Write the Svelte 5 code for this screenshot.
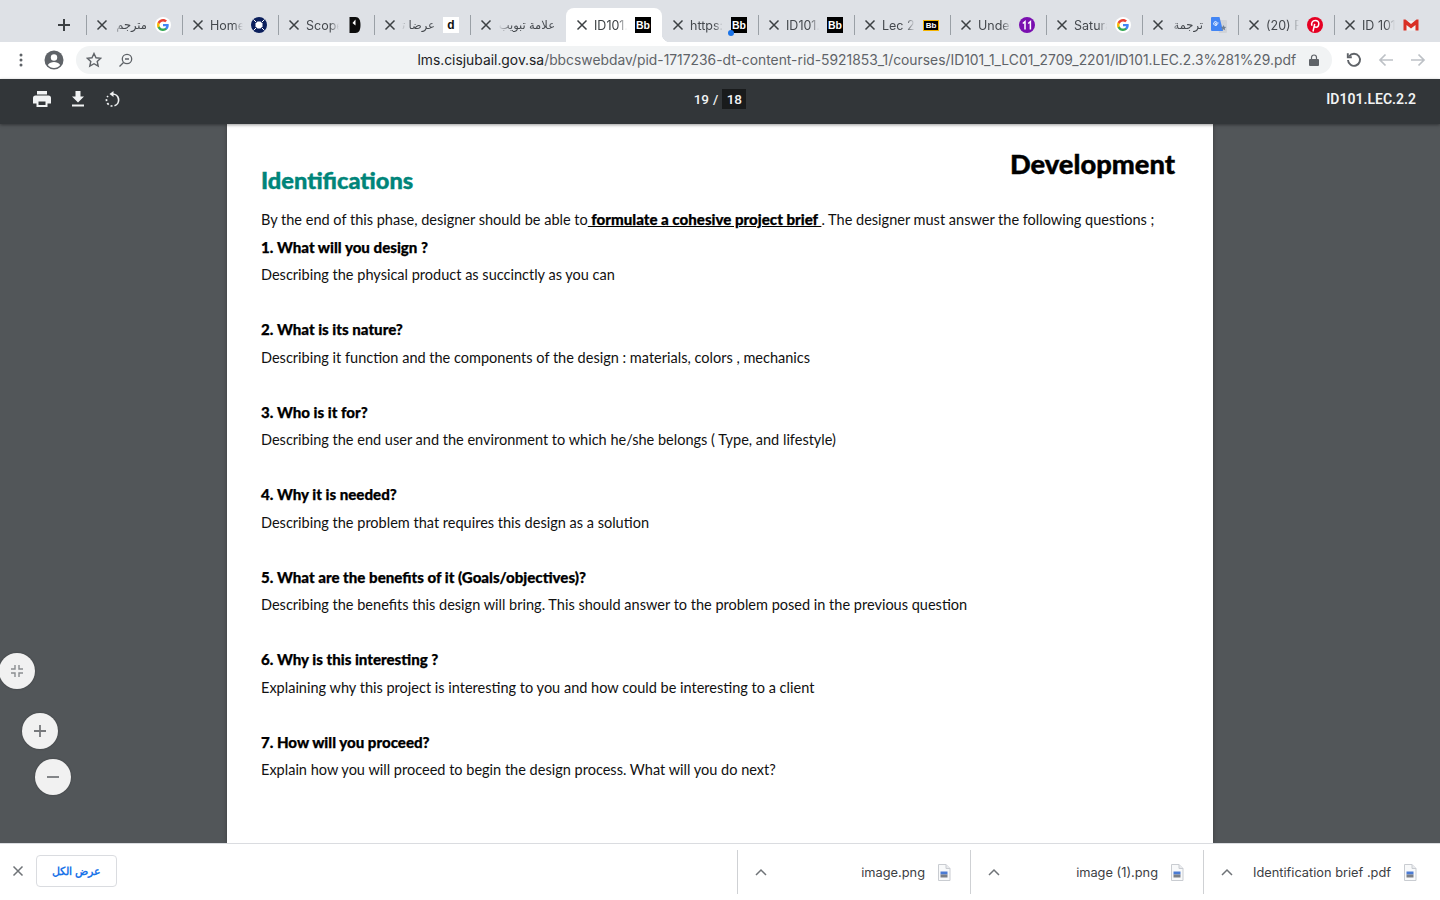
<script lang="ts">
	// Chrome window (RTL UI) showing a PDF lecture slide
	const tabs = [
		{ title: 'مترجم - Google', rtl: true, icon: 'google' },
		{ title: 'Home - Site', icon: 'ring' },
		{ title: 'Scope of work', icon: 'scope' },
		{ title: 'عرضا تقديميا', rtl: true, icon: 'd' },
		{ title: 'علامة تبويب جديدة', rtl: true, wide: true, icon: '' },
		{ title: 'ID101.LEC', active: true, icon: 'bb' },
		{ title: 'https://lms', icon: 'bb', dot: true },
		{ title: 'ID101.LEC', icon: 'bb' },
		{ title: 'Lec 2 slides', icon: 'bby' },
		{ title: 'Understand', icon: 'eleven' },
		{ title: 'Saturation', icon: 'google' },
		{ title: 'ترجمة Google', rtl: true, icon: 'translate' },
		{ title: '(20) Pinterest', icon: 'pin' },
		{ title: 'ID 101 mail', icon: 'gmail' }
	];

	const questions = [
		['1. What will you design ?', 'Describing the physical product as succinctly as you can'],
		['2. What is its nature?', 'Describing it function and the components of the design : materials, colors , mechanics'],
		['3. Who is it for?', 'Describing the end user and the environment to which he/she belongs ( Type, and lifestyle)'],
		['4. Why it is needed?', 'Describing the problem that requires this design as a solution'],
		['5. What are the benefits of it (Goals/objectives)?', 'Describing the benefits this design will bring. This should answer to the problem posed in the previous question'],
		['6. Why is this interesting ?', 'Explaining why this project is interesting to you and how could be interesting to a client'],
		['7. How will you proceed?', 'Explain how you will proceed to begin the design process. What will you do next?']
	];

	const downloads = ['image.png', 'image (1).png', 'Identification brief .pdf'];
</script>

{#snippet close(size = 12, color = '#3c4043')}
	<svg class="x" width={size} height={size} viewBox="0 0 12 12" fill="none" stroke={color} stroke-width="1.5">
		<path d="M1.500 1.500l9 9M10.500 1.500l-9 9" />
	</svg>
{/snippet}

{#snippet favicon(kind)}
	{#if kind === 'google'}
		<svg class="fav" viewBox="0 0 24 24">
			<circle cx="12" cy="12" r="12" fill="#fff" />
			<path fill="#4285f4" d="M20.600 12.200c0-.6-.1-1.200-.2-1.800H12v3.400h4.800c-.2 1.100-.8 2-1.800 2.700v2.200h2.900c1.700-1.600 2.700-3.900 2.700-6.500z" />
			<path fill="#34a853" d="M12 21c2.400 0 4.500-.8 5.900-2.200L15 16.500c-.8.500-1.800.9-3 .9-2.300 0-4.300-1.600-5-3.700H4v2.300C5.500 19 8.500 21 12 21z" />
			<path fill="#fbbc05" d="M7 13.700c-.2-.5-.3-1.100-.3-1.700s.1-1.200.3-1.700V8H4c-.6 1.200-1 2.600-1 4s.4 2.800 1 4z" />
			<path fill="#ea4335" d="M12 6.600c1.300 0 2.500.5 3.400 1.300L18 5.400C16.500 3.900 14.400 3 12 3 8.500 3 5.500 5 4 8l3 2.300c.7-2.100 2.700-3.700 5-3.700z" />
		</svg>
	{:else if kind === 'ring'}
		<svg class="fav" viewBox="0 0 16 16">
			<circle cx="8" cy="8" r="8" fill="#0b1f5c" />
			<path d="M6.500 4.500h3L11.500 6.500v3L9.500 11.500h-3L4.500 9.500v-3z" fill="#fff" />
			<path d="M2.500 2.500l2.500 2.500M13.500 2.500L11 5M2.500 13.500L5 11M13.500 13.500L11 11" stroke="#fff" stroke-width="1" />
		</svg>
	{:else if kind === 'scope'}
		<svg class="fav" viewBox="0 0 16 16">
			<path d="M2.500 0h6c3.500 0 5 3 5 8s-1.500 8-5 8h-6z" fill="#0c0c0c" />
			<path d="M8.500 2.500v6L5.500 6z" fill="#fff" />
		</svg>
	{:else if kind === 'd'}
		<span class="fav letter">d</span>
	{:else if kind === 'bb'}
		<span class="fav bb">Bb</span>
	{:else if kind === 'bby'}
		<span class="fav bb yellow">Bb</span>
	{:else if kind === 'eleven'}
		<svg class="fav" viewBox="0 0 16 16">
			<circle cx="8" cy="8" r="8" fill="#7a0fb0" />
			<path d="M3.800 6.500l2.200-1.800V12.500M9.200 6.500l2.200-1.800V12.500" fill="none" stroke="#fff" stroke-width="1.500" />
		</svg>
	{:else if kind === 'translate'}
		<svg class="fav" viewBox="0 0 16 16">
			<path d="M6 3h9a1 1 0 0 1 1 1v11a1 1 0 0 1-1 1H8z" fill="#d0d3d8" />
			<path d="M1 0h7.500L12 14H1a1 1 0 0 1-1-1V1a1 1 0 0 1 1-1z" fill="#4285f4" />
			<path d="M7.500 6H4.700v1.400h1.600A1.900 1.900 0 1 1 5.700 5" fill="none" stroke="#fff" stroke-width=".9" />
			<path d="M12.500 8l.8 1.800 1.900.2-1.400 1.300.4 1.900-1.700-1-1.700 1 .4-1.900L9.800 10l1.900-.2z" fill="#6f7f94" />
		</svg>
	{:else if kind === 'pin'}
		<svg class="fav" viewBox="0 0 16 16">
			<circle cx="8" cy="8" r="8" fill="#e60023" />
			<path d="M6 14.500l1.700-7.700M5 8.800C3.800 6.300 5.500 3.500 8.300 3.500c2.400 0 3.700 1.600 3.500 3.500-.2 2-1.300 3.200-2.700 3.200-.9 0-1.500-.5-1.600-1.200" fill="none" stroke="#fff" stroke-width="1.500" />
		</svg>
	{:else if kind === 'gmail'}
		<svg class="fav" viewBox="0 0 16 16">
			<path d="M2 4h12v9.500H2z" fill="#f1f1f1" />
			<path d="M.5 2.500v11h3V8L8 11.500 12.500 8v5.500h3v-11h-2L8 7 2.500 2.500z" fill="#d93025" />
		</svg>
	{/if}
{/snippet}

{#snippet fileIcon()}
	<svg class="file" width="14" height="17" viewBox="0 0 14 17">
		<path d="M1.500.5h7.500l4 4v12H1.500z" fill="#f8f9fa" stroke="#c9ccd1" />
		<path d="M9 .5V4.500h4" fill="#e8eaed" stroke="#c9ccd1" />
		<rect x="3.500" y="7.500" width="7" height="3" fill="#4a7bd4" />
		<rect x="3.500" y="10.500" width="7" height="3" fill="#7a7f86" />
	</svg>
{/snippet}

<div class="window">
	<div class="tabstrip">
		<div class="newtab">
			<svg width="14" height="14" viewBox="0 0 14 14" stroke="#3c4043" stroke-width="2"><path d="M7 1v12M1 7h12" /></svg>
		</div>
		{#each tabs as tab, i}
			<div class="tab" class:active={tab.active} class:nosep={tab.active || tabs[i - 1]?.active}>
				{@render close()}
				<span class="title" class:rtl={tab.rtl} class:wide={tab.wide}>{tab.title}</span>
				{@render favicon(tab.icon)}
				{#if tab.dot}<span class="dot"></span>{/if}
			</div>
		{/each}
	</div>

	<div class="addressrow">
		<svg class="kebab" width="4" height="14" viewBox="0 0 4 14" fill="#5f6368">
			<circle cx="2" cy="2" r="1.500" /><circle cx="2" cy="7" r="1.500" /><circle cx="2" cy="12" r="1.500" />
		</svg>
		<svg class="avatar" width="20" height="20" viewBox="0 0 20 20">
			<circle cx="10" cy="10" r="9.500" fill="#5f6368" />
			<circle cx="10" cy="7.500" r="3.200" fill="#fff" />
			<path d="M3.800 15c1.500-2.300 3.800-3 6.200-3s4.700.7 6.200 3c-1.400 1.800-3.700 3-6.200 3s-4.800-1.200-6.200-3z" fill="#fff" />
		</svg>
		<div class="omnibox">
			<svg width="16" height="16" viewBox="0 0 16 16" fill="none" stroke="#5f6368" stroke-width="1.400">
				<path d="M8 1.500l2 4.300 4.700.5-3.500 3.200 1 4.600L8 11.700l-4.200 2.400 1-4.600L1.300 6.300 6 5.800z" />
			</svg>
			<svg class="zoomout" width="15" height="15" viewBox="0 0 15 15" fill="none" stroke="#5f6368" stroke-width="1.300">
				<circle cx="9" cy="6" r="4.700" /><path d="M5.500 9.500L1.500 13.500M7 6h4" />
			</svg>
			<span class="url"><span class="host">lms.cisjubail.gov.sa</span>/bbcswebdav/pid-1717236-dt-content-rid-5921853_1/courses/ID101_1_LC01_2709_2201/ID101.LEC.2.3%281%29.pdf</span>
			<svg class="lock" width="10" height="12" viewBox="0 0 10 12" fill="#5f6368">
				<path d="M1 5h8a1 1 0 0 1 1 1v5a1 1 0 0 1-1 1H1a1 1 0 0 1-1-1V6a1 1 0 0 1 1-1z" />
				<path d="M2.500 5V3.500a2.500 2.500 0 0 1 5 0V5" fill="none" stroke="#5f6368" stroke-width="1.200" />
			</svg>
		</div>
		<div class="navs">
			<svg width="16" height="16" viewBox="0 0 16 16" fill="none" stroke="#5f6368" stroke-width="1.900">
				<path d="M3.200 4.200A6 6 0 1 1 2 8" /><path d="M1.800 1.200v4h4" />
			</svg>
			<svg width="16" height="16" viewBox="0 0 16 16" fill="none" stroke="#bdc1c6" stroke-width="1.700">
				<path d="M15 8H2M7.500 2.500L2 8l5.500 5.500" />
			</svg>
			<svg width="16" height="16" viewBox="0 0 16 16" fill="none" stroke="#bdc1c6" stroke-width="1.700">
				<path d="M1 8h13M8.500 2.500L14 8l-5.500 5.500" />
			</svg>
		</div>
	</div>

	<div class="pdfbar">
		<div class="tools">
			<svg width="18" height="16" viewBox="0 0 18 16" fill="#f1f3f4">
				<path d="M4 0h10v3.500H4zM2.500 4.500h13A2.500 2.500 0 0 1 18 7v5.500h-3.500V16h-11v-3.500H0V7a2.500 2.500 0 0 1 2.500-2.500zM5.500 10.500v3.500h7v-3.500z" />
			</svg>
			<svg width="14" height="16" viewBox="0 0 14 16" fill="#f1f3f4">
				<path d="M4.500 0h5v5.500H13L7 11.500 1 5.500h3.500zM1 13.500h12V15.500H1z" />
			</svg>
			<svg width="15" height="16" viewBox="0 0 15 16" fill="none" stroke="#f1f3f4" stroke-width="1.700">
				<path d="M7.500 3A6 6 0 0 1 9.500 14.700" />
				<path d="M7.500 15A6 6 0 0 1 1.500 9A6 6 0 0 1 3 5" stroke-dasharray="2 2" />
				<path d="M8.500 0v6L4.500 3z" fill="#f1f3f4" stroke="none" />
			</svg>
		</div>
		<div class="pager"><span>19</span><span class="slash">/</span><span class="total">18</span></div>
		<div class="docname">ID101.LEC.2.2</div>
	</div>

	<div class="viewer">
		<div class="page">
			<div class="heads">
				<h2>Identifications</h2>
				<h1>Development</h1>
			</div>
			<p>By the end of this phase, designer should be able to<b class="brief">&nbsp;formulate a cohesive project brief&nbsp;</b>. The designer must answer the following questions ;</p>
			{#each questions as q}
				<div class="question">
					<p><b>{q[0]}</b></p>
					<p>{q[1]}</p>
				</div>
			{/each}
		</div>

		<button class="float fit" aria-label="fit">
			<svg width="14" height="14" viewBox="0 0 14 14" fill="none" stroke="#8a8d90" stroke-width="1.400">
				<path d="M5 1v4H1M9 1v4h4M5 13V9H1M9 13V9h4" />
			</svg>
		</button>
		<button class="float plus" aria-label="zoom in">
			<svg width="14" height="14" viewBox="0 0 14 14" stroke="#77797c" stroke-width="1.800"><path d="M7 1v12M1 7h12" /></svg>
		</button>
		<button class="float minus" aria-label="zoom out">
			<svg width="14" height="14" viewBox="0 0 14 14" stroke="#77797c" stroke-width="1.800"><path d="M1 7h12" /></svg>
		</button>
	</div>

	<div class="downloads">
		<div class="shelfclose">{@render close(12, '#6f7377')}</div>
		<div class="showall">عرض الكل</div>
		<div class="items">
			{#each downloads as name}
				<div class="item">
					<svg width="12" height="8" viewBox="0 0 12 8" fill="none" stroke="#6f7377" stroke-width="1.500"><path d="M1 7l5-5 5 5" /></svg>
					<span class="name">{name}</span>
					{@render fileIcon()}
				</div>
			{/each}
		</div>
	</div>
</div>

<style>
	:global(body) {
		margin: 0;
		overflow: hidden;
	}

	.window {
		width: 1440px;
		height: 900px;
		display: flex;
		flex-direction: column;
		font-family: Inter, "Noto Sans", sans-serif;
		background: #fff;
	}

	/* tabs */
	.tabstrip {
		height: 42px;
		flex: none;
		background: #dee1e6;
		display: flex;
		align-items: flex-end;
	}

	.newtab {
		width: 86px;
		height: 34px;
		display: flex;
		align-items: center;
		justify-content: flex-end;
		padding-right: 15px;
		box-sizing: border-box;
	}

	.tab {
		position: relative;
		width: 96px;
		height: 34px;
		box-sizing: border-box;
		padding: 0 11px 0 10px;
		display: flex;
		align-items: center;
		flex: none;
		color: #45494e;
		font-size: 12.5px;
	}

	.tab::before {
		content: '';
		position: absolute;
		left: 0;
		top: 7px;
		height: 20px;
		width: 1px;
		background: #9aa0a6;
	}

	.tab.nosep::before {
		display: none;
	}

	.tab.active {
		background: #fff;
		border-radius: 8px 8px 0 0;
		color: #3c4043;
	}

	.tab.active::after {
		content: '';
		position: absolute;
		right: -8px;
		bottom: 0;
		width: 8px;
		height: 8px;
		background: radial-gradient(circle at 100% 0, transparent 8px, #fff 8.5px);
	}

	.title {
		margin-left: 6px;
		margin-right: 8px;
		flex: 1;
		min-width: 0;
		overflow: hidden;
		white-space: nowrap;
		mask-image: linear-gradient(to right, #000 72%, transparent);
	}

	.title.rtl {
		direction: rtl;
		font-family: "Liberation Sans", "DejaVu Sans", sans-serif;
		font-size: 11.5px;
		color: #45494e;
		mask-image: linear-gradient(to left, #000 75%, transparent);
	}

	.title.wide {
		margin-right: 0;
	}

	.x {
		flex: none;
	}

	.fav {
		width: 16px;
		height: 16px;
		flex: none;
	}

	.letter {
		background: #fff;
		color: #111;
		font: 700 12px/16px "Liberation Sans", sans-serif;
		text-align: center;
	}

	.bb {
		background: #000;
		color: #fff;
		font: 700 10.5px/16px "Liberation Sans", sans-serif;
		text-align: center;
	}

	.bb.yellow {
		box-sizing: border-box;
		height: 11px;
		line-height: 9px;
		border: 1px solid #f5b400;
		font-size: 8px;
	}

	.dot {
		position: absolute;
		left: 66px;
		top: 22px;
		width: 6px;
		height: 6px;
		border-radius: 50%;
		background: #1a73e8;
	}

	/* address row */
	.addressrow {
		height: 37px;
		flex: none;
		display: flex;
		align-items: center;
		padding-bottom: 1px;
		box-sizing: border-box;
		background: #fff;
	}

	.kebab {
		margin-left: 19px;
	}

	.avatar {
		margin-left: 21px;
	}

	.omnibox {
		margin-left: 12px;
		width: 1256px;
		height: 28px;
		box-sizing: border-box;
		border-radius: 14px;
		background: #f1f3f4;
		padding: 0 13px 0 10px;
		display: flex;
		align-items: center;
	}

	.zoomout {
		margin-left: 16px;
	}

	.url {
		margin-left: auto;
		font-size: 13.85px;
		color: #5f6368;
		white-space: nowrap;
		margin-bottom: 1px;
	}

	.host {
		color: #202124;
	}

	.lock {
		margin-left: 13px;
	}

	.navs {
		display: flex;
		gap: 16px;
		margin-left: 14px;
	}

	/* pdf toolbar */
	.pdfbar {
		height: 45px;
		flex: none;
		box-sizing: border-box;
		background: #323639;
		display: grid;
		grid-template-columns: 1fr auto 1fr;
		align-items: center;
		padding: 0 24px 5px;
		color: #f1f3f4;
		box-shadow: 0 1px 3px rgba(0, 0, 0, 0.4);
		position: relative;
		z-index: 1;
	}

	.tools {
		margin-left: 9px;
		display: flex;
		align-items: center;
		gap: 20px;
	}

	.pager {
		display: flex;
		align-items: center;
		font: 500 13.500px Roboto, sans-serif;
		gap: 4px;
	}

	.total {
		background: #191b1c;
		width: 24px;
		text-align: center;
		line-height: 20px;
	}

	.docname {
		justify-self: end;
		font: 600 14px Roboto, sans-serif;
	}

	/* viewer */
	.viewer {
		flex: 1;
		min-height: 0;
		position: relative;
		overflow: hidden;
		background: #525659;
		display: flex;
		justify-content: center;
	}

	.page {
		width: 986px;
		box-sizing: border-box;
		background: #fff;
		padding: 22px 38px 0 34px;
		box-shadow: 0 0 4px rgba(0, 0, 0, 0.3);
		font-family: Lato, "Open Sans", sans-serif;
		font-size: 14.53px;
		color: #111;
	}

	.heads {
		display: flex;
		justify-content: space-between;
		align-items: flex-start;
		height: 60px;
	}

	h1, h2 {
		margin: 0;
		font-weight: 900;
		font-size: 27.3px;
		line-height: 36px;
		-webkit-text-stroke: 0.4px currentColor;
	}

	h1 {
		color: #000;
	}

	h2 {
		color: #00857a;
		font-size: 23.6px;
		margin-top: 16px;
	}

	p {
		margin: 0;
		line-height: 27.5px;
		white-space: nowrap;
	}

	b {
		font-weight: 900;
		font-size: 15.1px;
		color: #000;
		-webkit-text-stroke: 0.25px currentColor;
	}

	.brief {
		text-decoration: underline;
	}

	.question {
		margin-bottom: 27.5px;
	}

	.float {
		position: absolute;
		width: 36px;
		height: 36px;
		padding: 0;
		border: none;
		border-radius: 50%;
		background: #f1f1f1;
		display: flex;
		align-items: center;
		justify-content: center;
		box-shadow: 0 0 2px rgba(0, 0, 0, 0.3);
	}

	.fit {
		left: -1px;
		top: 529px;
	}

	.plus {
		left: 22px;
		top: 589px;
	}

	.minus {
		left: 34.500px;
		top: 635px;
	}

	/* download shelf */
	.downloads {
		height: 57px;
		flex: none;
		box-sizing: border-box;
		border-top: 1px solid #dadce0;
		background: #fff;
		display: flex;
		align-items: center;
		padding-left: 12px;
	}

	.shelfclose {
		display: flex;
		margin-bottom: 2px;
	}

	.showall {
		margin: 0 0 2px 12px;
		width: 81px;
		height: 32px;
		box-sizing: border-box;
		border: 1px solid #dadce0;
		border-radius: 4px;
		display: flex;
		align-items: center;
		justify-content: center;
		direction: rtl;
		color: #1a73e8;
		font: 700 10.500px "Liberation Sans", sans-serif;
	}

	.items {
		margin: 0 4px 0 auto;
		display: flex;
	}

	.item {
		width: 233px;
		height: 44px;
		box-sizing: border-box;
		border-left: 1px solid #cfd1d4;
		padding: 0 19px 0 17px;
		display: flex;
		align-items: center;
		font-size: 12.8px;
		color: #3c4043;
	}

	.name {
		margin-left: auto;
		white-space: nowrap;
	}

	.file {
		margin-left: 12px;
	}
</style>
